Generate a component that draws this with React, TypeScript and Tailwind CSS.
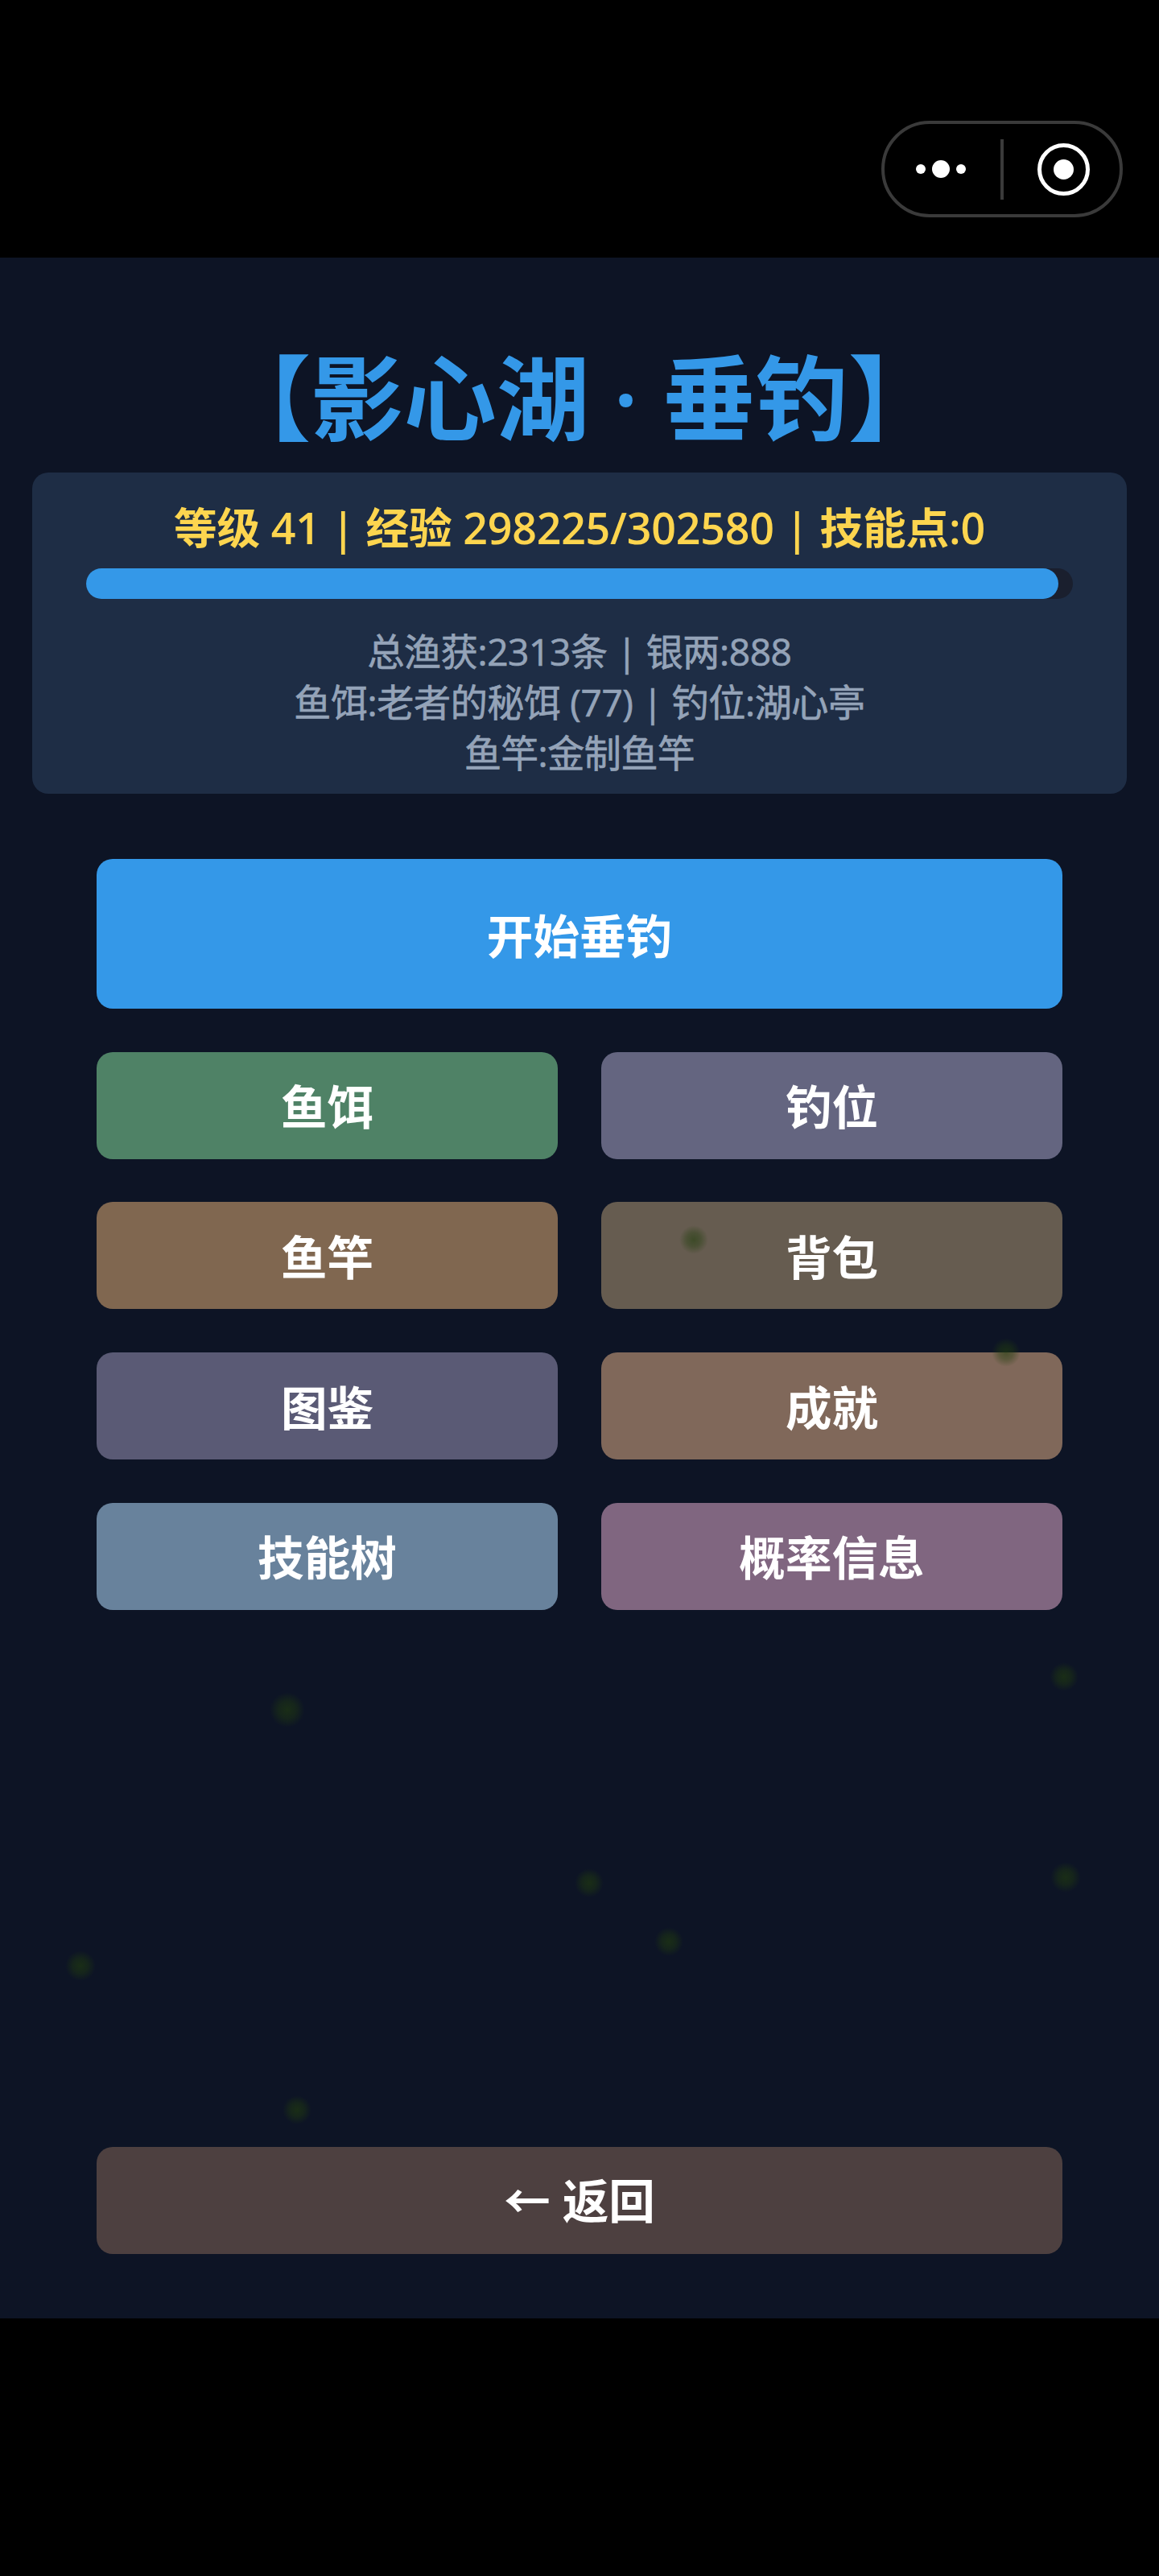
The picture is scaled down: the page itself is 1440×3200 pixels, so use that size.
const font = "font-['Open_Sans','Noto_Sans_CJK_SC',sans-serif]";

const menuRows = [
  [
    { label: "鱼饵", color: "bg-[#4f8266]" },
    { label: "钓位", color: "bg-[#646580]" },
  ],
  [
    { label: "鱼竿", color: "bg-[#806750]" },
    { label: "背包", color: "bg-[#665c50]" },
  ],
  [
    { label: "图鉴", color: "bg-[#5a5a75]" },
    { label: "成就", color: "bg-[#80685a]" },
  ],
  [
    { label: "技能树", color: "bg-[#68829c]" },
    { label: "概率信息", color: "bg-[#806680]" },
  ],
];

const fireflies = [
  "left-[844px] top-[1202px] w-[36px] h-[36px]",
  "left-[1232px] top-[1342px] w-[36px] h-[36px]",
  "left-[1304px] top-[1745px] w-[36px] h-[36px]",
  "left-[1305px] top-[1993px] w-[38px] h-[38px]",
  "left-[335px] top-[1782px] w-[44px] h-[44px]",
  "left-[714px] top-[2001px] w-[36px] h-[36px]",
  "left-[813px] top-[2074px] w-[36px] h-[36px]",
  "left-[81px] top-[2103px] w-[38px] h-[38px]",
  "left-[351px] top-[2283px] w-[36px] h-[36px]",
];

function Capsule() {
  return (
    <div className="flex h-[120px] w-[300px] items-center rounded-full border-4 border-[#3a3a3a]">
      <div className="flex w-[144px] items-center gap-[8px] pl-[39px]">
        <span className="h-[12px] w-[12px] rounded-full bg-white" />
        <span className="h-[22px] w-[22px] rounded-full bg-white" />
        <span className="h-[12px] w-[12px] rounded-full bg-white" />
      </div>
      <div className="h-[75px] w-[4px] bg-[#3a3a3a]" />
      <div className="ml-[42px] flex h-[65px] w-[65px] items-center justify-center rounded-full border-[5px] border-white">
        <span className="h-[25px] w-[25px] rounded-full bg-white" />
      </div>
    </div>
  );
}

function MenuButton({ label, color }: { label: string; color: string }) {
  return (
    <button className={`flex h-[133.2px] items-center justify-center rounded-[20px] pt-[5px] text-[57.6px] font-bold text-white ${color}`}>
      {label}
    </button>
  );
}

export default function App() {
  return (
    <div className={`flex h-[3200px] w-[1440px] flex-col bg-black ${font}`}>
      <div className="flex h-[320px] justify-end pr-[45px] pt-[150px]">
        <Capsule />
      </div>

      <div className="relative flex h-[2560px] flex-col items-center overflow-hidden bg-[#0d1425]">
        <h1 className="mt-[104px] h-[163px] text-center text-[115.2px] leading-[140px] font-semibold text-[#3498e8]">
          【影心湖 · 垂钓】
        </h1>

        <div className="flex h-[399px] w-[1360px] flex-col items-center rounded-[20px] bg-[#1e2d45] pt-[33px]">
          <div className="text-[53.76px] leading-[72px] font-semibold tracking-[-0.25px] text-[#fdd54f]">
            等级 41 | 经验 298225/302580 | 技能点:0
          </div>
          <div className="mt-[14px] h-[38px] w-[1226px] rounded-full bg-[#1a1f2e]">
            <div className="h-full w-[98.56%] rounded-full bg-[#3498e8]" />
          </div>
          <div className="mt-[34px] text-center text-[46.08px] leading-[63px] tracking-[-0.4px] text-[#94a3b8] [-webkit-text-stroke:0.7px_#94a3b8]">
            <div>总渔获:2313条 | 银两:888</div>
            <div>鱼饵:老者的秘饵 (77) | 钓位:湖心亭</div>
            <div>鱼竿:金制鱼竿</div>
          </div>
        </div>

        <div className="mt-[81px] flex w-[1200px] flex-col gap-[53.5px]">
          <button className="h-[186px] rounded-[20px] bg-[#3498e8] pt-[6px] text-[57.6px] font-bold text-white">
            开始垂钓
          </button>
          {menuRows.map((row) => (
            <div key={row[0].label} className="grid grid-cols-2 gap-[54px]">
              {row.map((item) => (
                <MenuButton key={item.label} label={item.label} color={item.color} />
              ))}
            </div>
          ))}
        </div>

        <button className="mt-auto mb-[80px] h-[133px] w-[1200px] rounded-[20px] bg-[#4d4040] pt-[2px] text-[57.6px] font-bold text-white">
          ← 返回
        </button>

        {fireflies.map((dot) => (
          <span
            key={dot}
            className={`absolute rounded-full bg-[radial-gradient(circle,rgba(34,62,13,0.6)_0%,rgba(34,62,13,0.4)_35%,rgba(34,62,13,0)_70%)] ${dot}`}
          />
        ))}
      </div>
    </div>
  );
}
